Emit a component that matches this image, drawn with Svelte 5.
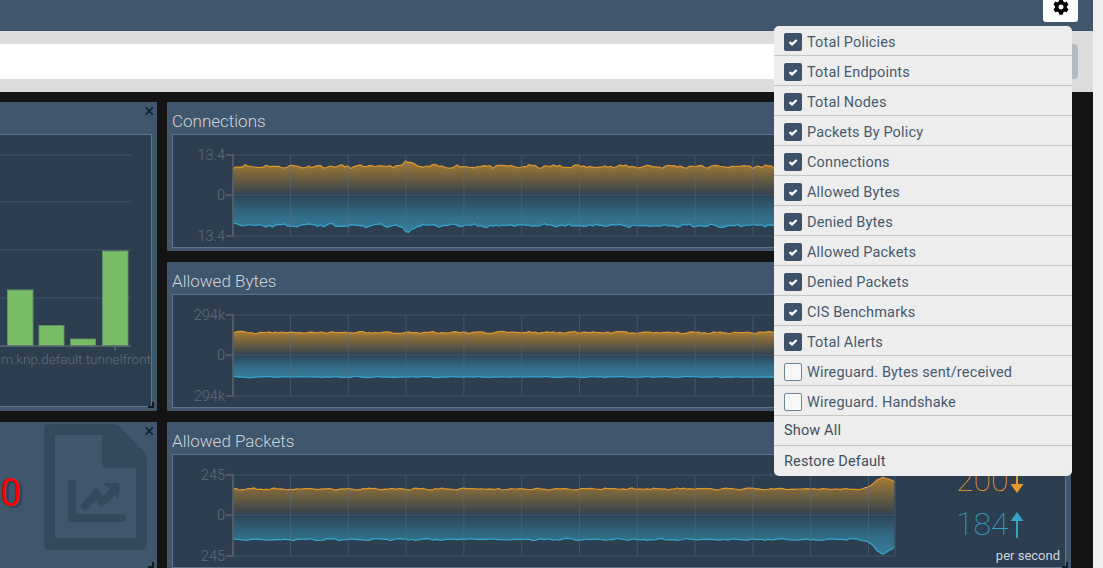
<script>
  // seeded noise so the charts look the same on each load
  function series(seed, count, base, noise, spikes = []) {
    let s = seed;
    const rnd = () => {
      s = (s * 16807) % 2147483647;
      return s / 2147483647 - 0.5;
    };
    const out = [];
    for (let i = 0; i < count; i++) {
      const x = i / (count - 1);
      let v = base + rnd() * noise * 2 + Math.sin(i * 0.8 + seed) * noise * 0.6;
      for (const sp of spikes) {
        const d = (x - sp.at) / sp.width;
        v += sp.height * Math.exp(-d * d);
      }
      out.push(v);
    }
    return out;
  }

  const X0 = 60;
  const X1 = 722;
  const MID = 60;

  function linePath(values, dir) {
    const step = (X1 - X0) / (values.length - 1);
    return values
      .map((v, i) => `${i ? 'L' : 'M'}${(X0 + i * step).toFixed(1)} ${(MID + dir * v).toFixed(1)}`)
      .join(' ');
  }

  function areaPath(values, dir) {
    return `${linePath(values, dir)} L${X1} ${MID} L${X0} ${MID} Z`;
  }

  const gridX = [117.5, 175.3, 233.1, 290.9, 348.7, 406.5, 464.3, 522.1, 579.9, 637.7, 695.5];

  const charts = [
    {
      id: 'conn',
      title: 'Connections',
      label: '13.4',
      down: series(11, 220, 28.5, 1.3, [{ at: 0.263, width: 0.009, height: 5 }]),
      up: series(23, 220, 30.5, 1.3, [{ at: 0.263, width: 0.009, height: 6 }]),
      recv: 12,
      sent: 12
    },
    {
      id: 'bytes',
      title: 'Allowed Bytes',
      label: '294k',
      down: series(37, 220, 22.5, 0.8),
      up: series(41, 220, 22, 0.45),
      recv: '124k',
      sent: '118k'
    },
    {
      id: 'packets',
      title: 'Allowed Packets',
      label: '245',
      down: series(53, 220, 26, 0.7, [
        { at: 0.979, width: 0.014, height: 11 },
        { at: 0.998, width: 0.012, height: 6 }
      ]),
      up: series(67, 220, 24.5, 0.7, [
        { at: 0.979, width: 0.014, height: 13.5 },
        { at: 0.998, width: 0.012, height: 6 }
      ]),
      recv: 200,
      sent: 184
    }
  ];

  const bars = [
    { x: 7.5, w: 25.5, top: 290 },
    { x: 39, w: 25, top: 325.5 },
    { x: 70.5, w: 25, top: 339 },
    { x: 102.5, w: 25.5, top: 251 }
  ];

  const widgets = [
    { name: 'Total Policies', on: true },
    { name: 'Total Endpoints', on: true },
    { name: 'Total Nodes', on: true },
    { name: 'Packets By Policy', on: true },
    { name: 'Connections', on: true },
    { name: 'Allowed Bytes', on: true },
    { name: 'Denied Bytes', on: true },
    { name: 'Allowed Packets', on: true },
    { name: 'Denied Packets', on: true },
    { name: 'CIS Benchmarks', on: true },
    { name: 'Total Alerts', on: true },
    { name: 'Wireguard. Bytes sent/received', on: false },
    { name: 'Wireguard. Handshake', on: false }
  ];
</script>

{#snippet panelChrome()}
  <span class="close">×</span>
  <span class="corner"></span>
{/snippet}

<div class="app">
  <header class="topbar">
    <button class="settings" aria-label="Settings">
      <svg viewBox="0 0 512 512" width="16" height="16">
        <path fill="#000" d="M487.4 315.7l-42.6-24.6c4.3-23.2 4.3-47 0-70.2l42.6-24.6c4.9-2.8 7.1-8.6 5.5-14-11.1-35.6-30-67.8-54.7-94.6-3.8-4.1-10-5.1-14.8-2.3L380.8 110c-17.9-15.4-38.5-27.3-60.8-35.1V25.8c0-5.6-3.9-10.5-9.4-11.7-36.7-8.2-74.3-7.8-109.2 0-5.5 1.2-9.4 6.1-9.4 11.7V75c-22.2 7.9-42.8 19.8-60.8 35.1L88.7 85.5c-4.9-2.8-11-1.9-14.8 2.3-24.7 26.7-43.6 58.9-54.7 94.6-1.7 5.4.6 11.2 5.5 14L67.3 221c-4.3 23.2-4.3 47 0 70.2l-42.6 24.6c-4.9 2.8-7.1 8.6-5.5 14 11.1 35.6 30 67.8 54.7 94.6 3.8 4.1 10 5.1 14.8 2.3l42.6-24.6c17.9 15.4 38.5 27.3 60.8 35.1v49.2c0 5.6 3.9 10.5 9.4 11.7 36.7 8.2 74.3 7.8 109.2 0 5.5-1.2 9.4-6.1 9.4-11.7v-49.2c22.2-7.9 42.8-19.8 60.8-35.1l42.6 24.6c4.9 2.8 11 1.9 14.8-2.3 24.7-26.7 43.6-58.9 54.7-94.6 1.5-5.5-.7-11.3-5.6-14.1zM256 336c-44.1 0-80-35.9-80-80s35.9-80 80-80 80 35.9 80 80-35.9 80-80 80z" />
      </svg>
    </button>
  </header>

  <div class="filterbar">
    <div class="search"></div>
    <div class="search-btn"></div>
  </div>

  <main class="dashboard">
    <section class="panel packets-policy">
      {@render panelChrome()}
      <div class="box">
        <svg width="151" height="271">
          {#each [20, 67, 115, 163] as y}
            <line x1="0" x2="131" y1={y} y2={y} class="grid" />
          {/each}
          {#each bars as b}
            <rect x={b.x} y={b.top - 135} width={b.w} height={346 - b.top} class="bar" />
          {/each}
          <line x1="0" x2="131" y1="211" y2="211" class="axis" />
          <line x1="115" x2="115" y1="211" y2="216" class="axis" />
          <text x="151" y="229" text-anchor="end" class="tick bar-label">m.knp.default.tunnelfront</text>
        </svg>
      </div>
    </section>

    {#each charts as c, i}
      <section class="panel chart-panel" style="grid-row: {i + 1}; grid-column: 2">
        {@render panelChrome()}
        <h2>{c.title}</h2>
        <div class="box chart-box">
          <svg width="724" height="112">
            <defs>
              <linearGradient id="{c.id}-down" x1="0" y1="0" x2="0" y2="1">
                <stop offset="0" stop-color="#a87c32" />
                <stop offset="1" stop-color="#a87c32" stop-opacity="0.05" />
              </linearGradient>
              <linearGradient id="{c.id}-up" x1="0" y1="0" x2="0" y2="1">
                <stop offset="0" stop-color="#37a3c9" stop-opacity="0.03" />
                <stop offset="1" stop-color="#367b99" />
              </linearGradient>
            </defs>
            <path d={areaPath(c.down, -1)} fill="url(#{c.id}-down)" />
            <path d={areaPath(c.up, 1)} fill="url(#{c.id}-up)" />
            <path d={linePath(c.down, -1)} class="line-down" />
            <path d={linePath(c.up, 1)} class="line-up" />

            {#each gridX as x}
              <line x1={x} x2={x} y1="20" y2="101" class="grid-v" />
            {/each}
            <line x1={X0} x2={X1} y1="20" y2="20" class="grid" />
            <line x1={X0} x2={X1} y1="60" y2="60" class="grid mid" />
            <line x1={X0} x2={X1} y1="101" y2="101" class="grid" />
            <line x1={X1} x2={X1} y1="20" y2="101" class="grid" />

            <path d="M53 20 H60 V101 H53 M53 60 H60" class="y-axis" />
            <text x="52" y="25" text-anchor="end" class="tick">{c.label}</text>
            <text x="52" y="65" text-anchor="end" class="tick">0</text>
            <text x="52" y="106" text-anchor="end" class="tick">{c.label}</text>
          </svg>
          <div class="rates">
            <div class="rate recv">
              <span>{c.recv}</span>
              <svg width="14" height="27" viewBox="0 0 14 27">
                <path d="M7 0 V20" stroke="#e6982b" stroke-width="2" fill="none" />
                <path d="M0.5 17 H13.5 L7 26 Z" fill="#e6982b" />
              </svg>
            </div>
            <div class="rate sent">
              <span>{c.sent}</span>
              <svg width="14" height="27" viewBox="0 0 14 27">
                <path d="M7 27 V7" stroke="#35a3c9" stroke-width="2" fill="none" />
                <path d="M0.5 10 H13.5 L7 1 Z" fill="#35a3c9" />
              </svg>
            </div>
            <small>per second</small>
          </div>
        </div>
      </section>
    {/each}

    <section class="panel alerts">
      {@render panelChrome()}
      <span class="count">0</span>
      <svg class="file-icon" width="103" height="126" viewBox="0 0 103 126">
        <path
          fill-rule="evenodd"
          d="M6 0 H67 Q73 0 77 4 L99 27 Q103 31 103 36 V120 Q103 126 97 126 H6 Q0 126 0 120 V6 Q0 0 6 0 Z M11 11 V114 H92 V44 H64 Q58 44 58 38 V11 Z"
        />
        <path d="M24 56 H32 V90 H79 Q82 90 82 94 Q82 98 79 98 H28 Q24 98 24 94 Z" />
        <path class="trend" d="M41 82 L52 70 L58 78 L72 65" />
        <path d="M59 59 H75 V75 Z" />
      </svg>
    </section>
  </main>

  <div class="widget-menu">
    {#each widgets as w}
      <label class="menu-row">
        <span class="check" class:on={w.on}>
          {#if w.on}
            <svg width="18" height="18" viewBox="0 0 18 18">
              <path d="M5.5 9.2 L8 11.4 L12.7 7" stroke="#fff" stroke-width="2.2" fill="none" />
            </svg>
          {/if}
        </span>
        {w.name}
      </label>
    {/each}
    <div class="menu-row action">Show All</div>
    <div class="menu-row action">Restore Default</div>
  </div>
</div>

<style>
  :global(body) {
    margin: 0;
    background: #efefef;
    overflow: hidden;
  }

  .app {
    position: relative;
    width: 1093px;
    height: 568px;
    overflow: hidden;
    font-family: Roboto, "Noto Sans", sans-serif;
  }

  .topbar {
    height: 31px;
    background: #40566d;
    display: flex;
    justify-content: flex-end;
    padding-right: 15px;
  }

  .settings {
    width: 35px;
    height: 22px;
    padding: 0 0 7px;
    border: 0;
    background: #fff;
    border-radius: 0 0 3px 3px;
    display: flex;
    align-items: flex-end;
    justify-content: center;
  }

  .filterbar {
    height: 61px;
    box-sizing: border-box;
    padding: 13px 15px 13px 0;
    background: #dcdcdc;
    display: flex;
  }

  .search {
    flex: 1;
    background: #fff;
  }

  .search-btn {
    width: 12px;
    background: #b4bcc3;
    border-radius: 0 4px 4px 0;
  }

  .dashboard {
    height: 476px;
    box-sizing: border-box;
    padding: 10px 22px 0 0;
    background: #141414;
    display: grid;
    grid-template-columns: 157px 904px;
    grid-template-rows: 149px 149px 149px;
    column-gap: 10px;
    row-gap: 11px;
  }

  .panel {
    position: relative;
    background: #40566d;
    min-width: 0;
  }

  .packets-policy {
    grid-row: 1 / span 2;
    grid-column: 1;
    padding: 32px 5px 4px 0;
  }

  .chart-panel {
    padding: 0 5px 3px;
    display: flex;
    flex-direction: column;
  }

  h2 {
    margin: 0;
    height: 32px;
    line-height: 38px;
    font-size: 17px;
    font-weight: 300;
    color: #d0d4d8;
  }

  .box {
    box-sizing: border-box;
    height: 100%;
    background: #2c3e50;
    border: 1px solid #5f7488;
    border-left-width: 0;
    overflow: hidden;
  }

  .chart-box {
    height: 114px;
    flex: none;
    border-left-width: 1px;
    display: flex;
  }

  .close {
    position: absolute;
    top: 0;
    right: 3px;
    font-size: 18px;
    line-height: 18px;
    color: #141c24;
  }

  .corner {
    position: absolute;
    right: 3px;
    bottom: 3px;
    width: 4px;
    height: 4px;
    border-right: 2px solid #141c24;
    border-bottom: 2px solid #141c24;
  }

  .grid {
    stroke: #3a4e62;
    stroke-width: 1.5;
  }

  .grid.mid {
    stroke: #45596e;
    stroke-width: 1;
  }

  .grid-v {
    stroke: #5a7085;
    stroke-opacity: 0.5;
    stroke-width: 1;
  }

  .axis {
    stroke: #5b6670;
    stroke-width: 1.5;
  }

  .y-axis {
    fill: none;
    stroke: #59646e;
    stroke-width: 1.5;
  }

  .bar {
    fill: #79bc66;
    stroke: #5f8f63;
    stroke-width: 1;
  }

  .tick {
    fill: #626c74;
    font-size: 14.5px;
    font-weight: 300;
  }

  .bar-label {
    font-size: 13.6px;
  }

  .line-down {
    fill: none;
    stroke: #e0952b;
    stroke-width: 1.2;
  }

  .line-up {
    fill: none;
    stroke: #33a7ce;
    stroke-width: 1.2;
  }

  .rates {
    position: relative;
    flex: 1;
    padding: 3px 0 0 59px;
  }

  .rate {
    display: flex;
    align-items: center;
    gap: 1px;
    height: 44px;
    font-size: 32px;
    font-weight: 100;
  }

  .recv {
    color: #e6982b;
  }

  .sent {
    color: #35a3c9;
  }

  small {
    position: absolute;
    right: 5px;
    bottom: 4px;
    font-size: 13px;
    font-weight: 400;
    color: #d0d4d8;
  }

  .alerts {
    grid-row: 3;
    grid-column: 1;
    display: flex;
    align-items: flex-start;
  }

  .count {
    width: 21px;
    margin-top: 48px;
    margin-right: 23px;
    font-size: 38px;
    line-height: 46px;
    color: #f00;
    text-shadow: 3px 2px 0 #2f4357;
    text-align: right;
  }

  .file-icon {
    margin-top: 2px;
    fill: #35495d;
  }

  .trend {
    fill: none;
    stroke: #35495d;
    stroke-width: 8;
    stroke-linecap: round;
    stroke-linejoin: miter;
  }

  .widget-menu {
    position: absolute;
    left: 774px;
    top: 26px;
    width: 298px;
    background: #ededed;
    border-radius: 5px;
  }

  .menu-row {
    box-sizing: border-box;
    height: 30px;
    display: flex;
    align-items: center;
    gap: 5px;
    padding: 3px 10px 0;
    font-size: 14.5px;
    letter-spacing: 0.15px;
    color: #475b6f;
    border-bottom: 1px solid #c6c6c6;
  }

  .menu-row:last-child {
    border-bottom: 0;
  }

  .action {
    padding-top: 0;
    color: #3f4e5d;
  }

  .check {
    width: 18px;
    height: 18px;
    box-sizing: border-box;
    background: #f8f8f8;
    border: 1px solid #6f8397;
    border-radius: 2px;
    flex: none;
  }

  .check.on {
    background: #3d5268;
    border: 0;
  }
</style>
